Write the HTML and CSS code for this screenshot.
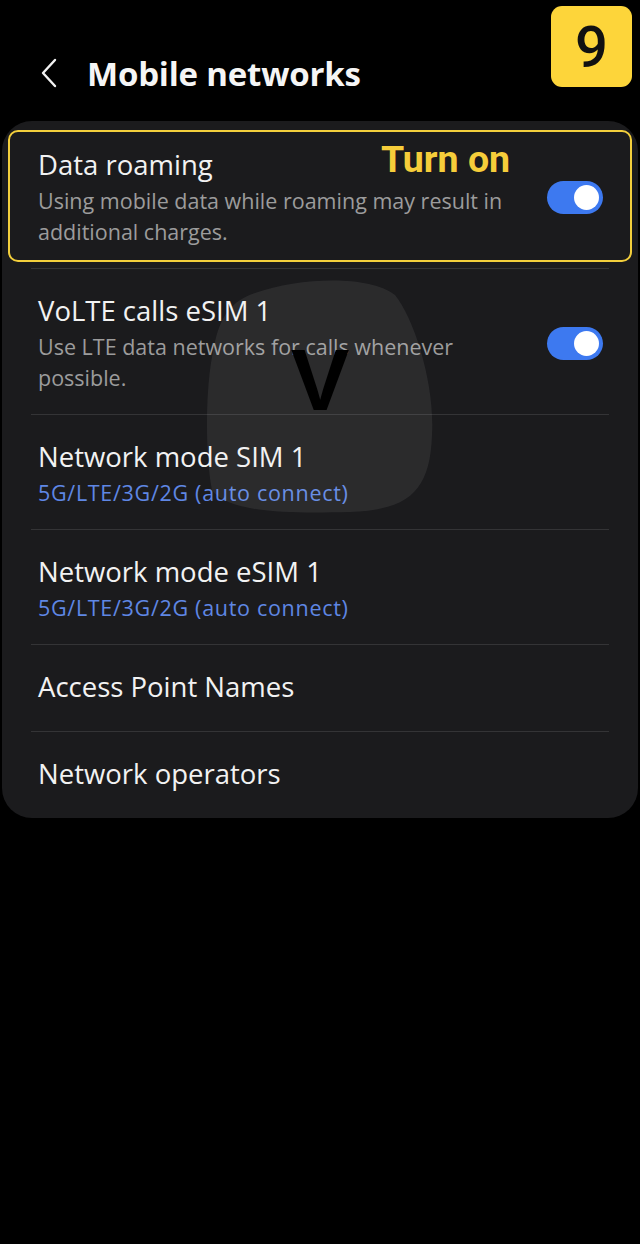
FILE: index.html
```html
<!DOCTYPE html>
<html lang="en">
<head>
  <meta charset="UTF-8" />
  <title>Mobile networks</title>
  <meta name="viewport" content="width=device-width, initial-scale=1.0"/>
  <link rel="stylesheet" href="styles.css">
</head>
<body>

  <header class="top-bar">
    <div class="title-wrap">
      <svg class="back-icon" width="18" height="30" viewBox="0 0 18 30">
        <polyline points="15,2 3,15 15,28" fill="none" stroke="#f2f2f2" stroke-width="2.4" stroke-linecap="round" stroke-linejoin="round"/>
      </svg>
      <h1>Mobile networks</h1>
    </div>
    <div class="step-badge">9</div>
  </header>

  <main class="card">
    <!-- Marca de destaque (anotação) -->
    <div class="highlight-box"></div>
    <div class="turn-on">Turn on</div>

    <div class="row">
      <div class="row-text">
        <div class="row-title">Data roaming</div>
        <div class="row-sub">Using mobile data while roaming may result in additional charges.</div>
      </div>
      <span class="switch"></span>
    </div>

    <div class="row">
      <div class="row-text">
        <div class="row-title">VoLTE calls eSIM 1</div>
        <div class="row-sub">Use LTE data networks for calls whenever possible.</div>
      </div>
      <span class="switch"></span>
    </div>

    <div class="row">
      <div class="row-text">
        <div class="row-title">Network mode SIM 1</div>
        <div class="row-sub blue">5G/LTE/3G/2G (auto connect)</div>
      </div>
    </div>

    <div class="row">
      <div class="row-text">
        <div class="row-title">Network mode eSIM 1</div>
        <div class="row-sub blue">5G/LTE/3G/2G (auto connect)</div>
      </div>
    </div>

    <div class="row single">
      <div class="row-text">
        <div class="row-title">Access Point Names</div>
      </div>
    </div>

    <div class="row single">
      <div class="row-text">
        <div class="row-title">Network operators</div>
      </div>
    </div>

    <!-- Marca d'água -->
    <svg class="watermark" width="240" height="245" viewBox="0 0 240 245">
      <path d="M55 18 C 100 2, 170 0, 195 20 C 215 45, 235 110, 232 160 C 230 215, 210 235, 150 237 C 100 238, 30 240, 12 215 C 5 180, 5 110, 14 72 C 20 40, 32 26, 55 18 Z" fill="rgba(255,255,255,0.07)"/>
      <text x="120" y="135" text-anchor="middle" font-family="Liberation Sans, Arial, sans-serif" font-weight="bold" font-size="88" fill="#000">V</text>
    </svg>
  </main>

</body>
</html>
```

FILE: styles.css
```css
/* RESET BÁSICO */
* {
  margin: 0;
  padding: 0;
  box-sizing: border-box;
}

body {
  background-color: #000;
  font-family: "Open Sans", "Noto Sans", Arial, sans-serif;
  color: #f2f2f2;
  min-height: 100vh;
}

.top-bar {
  height: 121px;
  display: flex;
  align-items: flex-start;
  justify-content: space-between;
  padding: 6px 8px 0 40px;
}

.title-wrap {
  display: flex;
  align-items: center;
  gap: 29px;
  height: 40px;
  margin-top: 47px;
}

.title-wrap h1 {
  font-size: 33px;
  font-weight: 700;
  color: #f5f5f5;
  letter-spacing: -0.2px;
}

.step-badge {
  width: 81px;
  height: 81px;
  background-color: #fdd53a;
  border-radius: 11px;
  color: #111;
  font-family: Roboto, Arial, sans-serif;
  font-size: 58px;
  font-weight: 500;
  display: flex;
  align-items: center;
  justify-content: center;
}

.card {
  position: relative;
  margin: 0 2px;
  background-color: #1b1b1d;
  border-radius: 30px;
  padding: 2px 29px 0;
  min-height: 697px;
}

.row {
  display: flex;
  align-items: center;
  justify-content: space-between;
  padding: 24px 6px 21px 7px;
  border-bottom: 1px solid #343436;
}

.row:last-of-type {
  border-bottom: none;
}

.row.single {
  padding-bottom: 26px;
}

.row-title {
  font-size: 27.5px;
  line-height: 36px;
  color: #f2f2f2;
}

.row-sub {
  margin-top: 2px;
  font-size: 21.5px;
  line-height: 31px;
  color: #9c9c9c;
  max-width: 480px;
}

.row-sub.blue {
  color: #5f87e4;
  letter-spacing: 0.7px;
}

/* Interruptor ligado */
.switch {
  position: relative;
  flex-shrink: 0;
  width: 56px;
  height: 33px;
  border-radius: 17px;
  background-color: #3d79f0;
}

.switch::after {
  content: "";
  position: absolute;
  top: 4px;
  right: 4px;
  width: 25px;
  height: 25px;
  border-radius: 50%;
  background-color: #fff;
}

.highlight-box {
  position: absolute;
  top: 9px;
  left: 6px;
  right: 6px;
  height: 132px;
  border: 2px solid #f3cf3c;
  border-radius: 10px;
  pointer-events: none;
}

.turn-on {
  position: absolute;
  top: 17px;
  left: 379px;
  font-family: Roboto, Arial, sans-serif;
  font-size: 37.5px;
  font-weight: 700;
  line-height: 42px;
  color: #f6cd3a;
}

.watermark {
  position: absolute;
  top: 154px;
  left: 198px;
  pointer-events: none;
}
```
